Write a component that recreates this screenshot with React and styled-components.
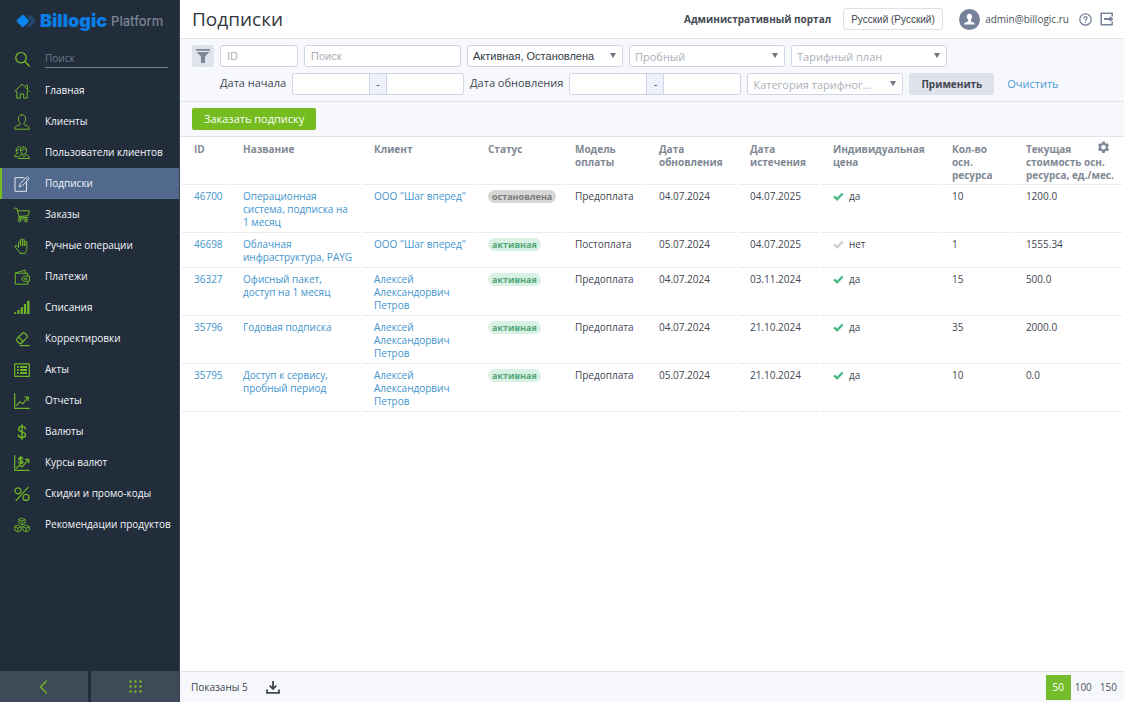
import React from 'react';
import { useState } from 'react';
import styled, { createGlobalStyle, css } from 'styled-components';

const GlobalStyle = createGlobalStyle`
  * {
    box-sizing: border-box;
  }

  body {
    margin: 0;
    background-color: #ffffff;
    color: #3f4650;
    font-family: "Open Sans", "Noto Sans", sans-serif;
    font-size: 10px;
    line-height: 13px;
  }

  a {
    text-decoration: none;
  }
`;

const Layout = styled.div`
  display: flex;
  min-height: 100vh;
`;

/* Sidebar */

const Sidebar = styled.aside`
  display: flex;
  flex-direction: column;
  flex: none;
  width: 180px;
  background-color: #222d3c;
  border-right: 1px solid #39424f;
`;

const Logo = styled.a`
  display: flex;
  align-items: center;
  height: 42px;
  padding-left: 16px;
  gap: 4px;
  font-family: Inter, "Liberation Sans", sans-serif;
  line-height: 20px;
`;

const LogoName = styled.span`
  color: #0b7de6;
  font-size: 18px;
  font-weight: 900;
`;

const LogoSuffix = styled.span`
  color: #7c8492;
  font-size: 13px;
  font-weight: 500;
`;

const SearchRow = styled.label`
  display: flex;
  align-items: center;
  height: 33px;
  padding: 0 11px 0 14px;
  gap: 15px;
  color: #7cc623;
`;

const SearchInput = styled.input`
  flex: 1;
  min-width: 0;
  height: 18px;
  padding: 0;
  border: none;
  border-bottom: 1px solid #7b8491;
  background-color: transparent;
  color: #e9ecf1;
  font-family: inherit;
  font-size: 10px;
  outline: none;

  &::placeholder {
    color: #717a88;
    opacity: 1;
  }
`;

const Menu = styled.nav`
  display: flex;
  flex-direction: column;
  flex: 1;
`;

const MenuItem = styled.a`
  display: flex;
  align-items: center;
  height: 31px;
  padding-left: 14px;
  gap: 15px;
  color: #f4f6f9;
  white-space: nowrap;

  svg {
    flex: none;
    color: #6fb526;
  }

  ${({ $active }) => $active && css`
    background-color: #50698d;
    box-shadow: inset 2px 0 0 #76bc21;

    svg {
      color: #e3e9f1;
    }
  `}
`;

const SidebarFooter = styled.div`
  display: grid;
  grid-template-columns: 1fr 1fr;
  gap: 3px;
`;

const SidebarButton = styled.button`
  display: flex;
  align-items: center;
  justify-content: center;
  height: 31px;
  padding: 0;
  border: none;
  background-color: #3f4a58;
  color: #76bc21;
  cursor: pointer;
`;

/* Page */

const Page = styled.main`
  display: flex;
  flex-direction: column;
  flex: 1;
  min-width: 0;
`;

const Header = styled.header`
  display: flex;
  align-items: center;
  height: 39px;
  padding: 0 10px 0 12px;
  border-bottom: 1px solid #e0e4ee;
`;

const Title = styled.h1`
  flex: 1;
  margin: 0;
  color: #33373d;
  font-size: 19px;
  font-weight: 400;
  line-height: 26px;
`;

const Portal = styled.strong`
  margin-right: 12px;
  color: #444a53;
`;

const Language = styled.select`
  height: 22px;
  margin-right: 16px;
  padding: 0 7px;
  border: 1px solid #dde0e6;
  border-radius: 3px;
  background-color: #ffffff;
  color: #3f4650;
  font-family: "Liberation Sans", Arial, sans-serif;
  font-size: 10px;
  appearance: none;
`;

const User = styled.a`
  display: flex;
  align-items: center;
  gap: 5px;
  margin-right: 10px;
  color: #4b525d;
`;

const IconButton = styled.button`
  display: flex;
  padding: 0;
  border: none;
  background-color: transparent;
  color: ${({ $color }) => $color || '#76829a'};
  cursor: pointer;

  & + & {
    margin-left: 8px;
  }
`;

const Filters = styled.form`
  display: flex;
  align-items: flex-start;
  gap: 6px;
  padding: 6px 12px;
  border-bottom: 1px solid #e0e4ee;
  background-color: #f7f8fc;
  font-size: 11px;
`;

const FilterToggle = styled.button`
  display: flex;
  align-items: center;
  justify-content: center;
  flex: none;
  width: 22px;
  height: 22px;
  padding: 0;
  border: none;
  border-radius: 2px;
  background-color: #dfe3ec;
  color: #7d8795;
  cursor: pointer;
`;

const Fields = styled.div`
  display: flex;
  flex-wrap: wrap;
  gap: 6px;
`;

const Input = styled.input`
  width: ${({ $small }) => ($small ? '78px' : '157px')};
  height: 22px;
  padding: 0 6px;
  border: 1px solid #cfd5e2;
  border-radius: 3px;
  background-color: #ffffff;
  color: #3f4650;
  font-family: "Liberation Sans", Arial, sans-serif;
  font-size: 11px;
  outline: none;

  &::placeholder {
    color: #aab0ba;
    opacity: 1;
  }
`;

const SelectBox = styled.div`
  position: relative;
  width: 156px;
  height: 22px;

  svg {
    position: absolute;
    top: 8px;
    right: 7px;
    color: #6d747f;
    pointer-events: none;
  }
`;

const SelectField = styled.select`
  width: 100%;
  height: 100%;
  padding: 0 26px 0 5px;
  border: 1px solid #cfd5e2;
  border-radius: 3px;
  background-color: #ffffff;
  color: ${({ $filled }) => ($filled ? '#333a45' : '#aab0ba')};
  font-family: ${({ $filled }) => ($filled ? '"Liberation Sans", Arial' : '"Open Sans", "Noto Sans"')}, sans-serif;
  font-size: 11px;
  text-overflow: ellipsis;
  appearance: none;
`;

const DateField = styled.div`
  display: flex;
  gap: 6px;
  line-height: 20px;
`;

const Range = styled.div`
  display: flex;
  height: 22px;
  border: 1px solid #cfd5e2;
  border-radius: 3px;
  background-color: #ffffff;
  overflow: hidden;
`;

const RangeInput = styled.input`
  width: 76px;
  padding: 0 6px;
  border: none;
  background-color: transparent;
  font-size: 11px;
  outline: none;
`;

const RangeDash = styled.span`
  width: 18px;
  border: solid #cfd5e2;
  border-width: 0 1px;
  background-color: #edf1fb;
  text-align: center;
`;

const ApplyButton = styled.button`
  height: 22px;
  padding: 0 12px;
  border: none;
  border-radius: 2px;
  background-color: #dfe2ec;
  color: #3f4650;
  font-family: inherit;
  font-size: 10px;
  font-weight: 700;
  cursor: pointer;
`;

const ClearLink = styled.a`
  padding: 0 7px;
  color: #4a9ad6;
  line-height: 22px;
`;

const Toolbar = styled.div`
  display: flex;
  padding: 6px 12px;
  border-bottom: 1px solid #e0e4ee;
  background-color: #f7f8fc;
`;

const OrderButton = styled.button`
  height: 22px;
  padding: 0 12px 1px;
  border: none;
  border-radius: 2px;
  background-color: #74bc1f;
  color: #ffffff;
  font-family: inherit;
  font-size: 11px;
  cursor: pointer;
`;

/* Table */

const TableArea = styled.section`
  position: relative;
  flex: 1;
`;

const TableSettings = styled.div`
  position: absolute;
  top: 4px;
  right: 14px;
`;

const Table = styled.table`
  width: 100%;
  table-layout: fixed;
  border-collapse: separate;
  border-spacing: 2px 0;
`;

const Th = styled.th`
  padding: 6px 4px 2px 12px;
  border-bottom: 1px solid #e8ebf0;
  color: #808994;
  font-weight: 700;
  text-align: left;
  vertical-align: top;
`;

const Td = styled.td`
  padding: 5px 4px 3px 12px;
  border-bottom: 1px solid #e8ebf0;
  vertical-align: top;
`;

const CellLink = styled.a`
  color: #4294cd;
`;

const Badge = styled.span`
  display: inline-block;
  padding: 0 4px;
  border-radius: 7px;
  background-color: ${({ $stopped }) => ($stopped ? '#d6d6d6' : '#d9f1e3')};
  color: ${({ $stopped }) => ($stopped ? '#7b7b7b' : '#4fa677')};
  font-size: 9px;
  font-weight: 700;
  line-height: 13px;
  vertical-align: top;
`;

const Flag = styled.span`
  display: flex;
  align-items: center;
  gap: 5px;

  svg {
    color: ${({ $on }) => ($on ? '#4dba87' : '#ccd3d8')};
  }
`;

const Footer = styled.footer`
  display: flex;
  align-items: center;
  height: 31px;
  padding: 0 3px 0 11px;
  gap: 18px;
  border-top: 1px solid #e0e4ee;
  background-color: #f7f8fc;
`;

const Pages = styled.div`
  display: flex;
  margin-left: auto;
`;

const PageSize = styled.button`
  min-width: 25px;
  height: 25px;
  padding: 0 4px;
  border: none;
  background-color: ${({ $active }) => ($active ? '#74bc2b' : 'transparent')};
  color: ${({ $active }) => ($active ? '#ffffff' : '#4b525d')};
  font-family: inherit;
  font-size: 10px;
  cursor: pointer;
`;

/* Icons */

const Icon = ({ size = 16, box = 16, width = 1, children }) => (
  <svg
    width={size}
    height={size}
    viewBox={`0 0 ${box} ${box}`}
    fill="none"
    stroke="currentColor"
    strokeWidth={width}
    strokeLinecap="round"
    strokeLinejoin="round"
    aria-hidden="true"
  >
    {children}
  </svg>
);

const icons = {
  search: <><circle cx="7" cy="6.7" r="5.2" /><path d="M10.8 10.5 15.2 15" /></>,
  home: <path d="M.6 8.4 8 1.2l7.4 7.2M11.6 2.4h1.9v3.6M2.8 8.2v6.9h3.5v-4.2h3.4v4.2h3.5V8.2" />,
  client: <path d="M8 .8c-2.3 0-3.6 1.7-3.6 4 0 1.9.8 3.5 1.8 4.4.2 1.5-.6 1.7-2.2 2.2C1.900 12 .8 12.700.8 15.200h14.400c0-2.500-1.100-3.200-3.200-3.800-1.600-.5-2.400-.7-2.200-2.200 1-.9 1.800-2.500 1.800-4.400 0-2.300-1.300-4-3.600-4Z" />,
  users: (
    <>
      <path d="M9.600 2c-1.900 0-3 1.200-3 3.100 0 2.400 1.300 4.200 3 4.200s3-1.800 3-4.200c0-1.900-1.100-3.100-3-3.100ZM6.700 5c2.200.3 3.300-.4 4-1.300.4.800 1 1.200 1.900 1.400" />
      <path d="M8 8.900c0 1.500-3.500 1.300-3.500 4.600h11c0-3.300-4.200-3.100-4.200-4.600M8.200 10.600l1.500 1.200 1.500-1.200" />
      <path d="M6.600 2.100C5.800 1.600 3.600 1.700 2.700 3.100c-.9 1.300-.6 3.200 0 4.300.4.700.9 1.100 1.500 1.300M2.300 5.400c1.200.1 2.400-.4 3-1.200M3 8.700C2.600 9.500.6 9.700.6 11.700h3.100" />
    </>
  ),
  subscription: (
    <>
      <path d="M10 1.700H1v13.600h11.500V6.500" />
      <path d="m5.300 10.700.9-3.100 6.500-6.400c.5-.4 1-.4 1.500 0l.6.600c.4.500.4 1 0 1.400L8.300 9.700l-3 1ZM11.700 2.200l2.100 2.100" strokeWidth=".9" />
    </>
  ),
  cart: (
    <>
      <path d="M.5 1.200h2.400l2.400 9.300h8.600M3.600 3.800h11.900l-1.600 5-8.900.6M5.300 10.500l-.9 1.500h9" />
      <circle cx="5.600" cy="13.700" r="1.300" /><circle cx="12" cy="13.700" r="1.300" />
    </>
  ),
  hand: <path d="M4.600 9.600V4.200c0-1.400 2-1.400 2 0v3.600V2c0-1.500 2.100-1.500 2.100 0v5.800V2.600c0-1.500 2.100-1.500 2.100 0v5.300-3.600c0-1.400 2-1.400 2 0v6c0 2-.6 3.200-1.500 4.100v1H6v-1C4.200 13 3.200 11.200 1.200 9c-1-1.400.6-2.300 1.600-1.300l1.800 1.900" />,
  wallet: (
    <>
      <path d="M13.800 7V4.200H1.300v11h12.500v-2.800M1.300 4.200 11.200 1v3.200" />
      <path d="M15 7H10.500c-3.300 0-3.300 5.300 0 5.300H15ZM12.800 9v1.500" /><circle cx="10.700" cy="9.700" r=".8" />
    </>
  ),
  bars: (
    <g fill="currentColor" stroke="none">
      <path d="M.2 12.200h1.900V14H.2zM3.400 10h2.200v4H3.400zM6.700 7.200h2.200V14H6.700zM9.900 4h2.200v10H9.900zM13.100.7h2.400V14h-2.400z" />
    </g>
  ),
  eraser: <path d="M10.800 2.300 12.900 4.300c.8.800.8 1.500 0 2.300L7.600 12c-.9.900-1.700.9-2.600 0L2.900 10c-.8-.8-.8-1.600 0-2.400l5.500-5.400c.8-.8 1.600-.7 2.400.1ZM4.600 6l4.600 4.600M6.200 14.700h9" strokeWidth="1.200" />,
  acts: (
    <>
      <path d="M.7 1.800h14.600v12.500H.7z" strokeWidth="1.200" />
      <path d="M3 4.900h1.600M6 4.900h7M3 8h1.600M6 8h7M3 11.100h1.600M6 11.100h7" strokeWidth="2" strokeLinecap="butt" />
    </>
  ),
  reports: <path d="M.7.700v14.600h14.600M2.700 12.300 6 8.600l2.700 2.300 5.600-6.700M10.800 4h3.500v3.600" strokeWidth="1.200" />,
  dollar: <path d="M11.300 4.700C11.200 3.200 10 2.400 8 2.400S4.700 3.300 4.700 4.900c0 4 6.800 2 6.800 6 0 1.700-1.400 2.600-3.500 2.600s-3.500-.9-3.600-2.600M8 .8v14.400" strokeWidth="1.400" />,
  rates: (
    <>
      <path d="M.7.700v14.600h14.600M2.700 13l3-3 2.300 2 6.400-7.400M11.500 4.400h3.200v3.500" strokeWidth="1.200" />
      <path d="M8.700 3.500C8.500 2.300 4.700 2 4.700 3.900c0 1.800 4.200 1 4.200 3 0 1.800-4.100 1.600-4.300.2M6.800 1.200v7.800" strokeWidth="1.400" />
    </>
  ),
  percent: <g strokeWidth="1.200"><circle cx="4" cy="4.800" r="3" /><circle cx="12" cy="11.400" r="3" /><path d="M14 1.400 2 14.700" /></g>,
  cubes: (
    <g strokeWidth=".9">
      <path d="m8 1.200 3.100 1.500v3.400L8 7.600 4.900 6.100V2.700ZM4.900 2.700 8 4.200l3.100-1.500M8 4.200v3.400" />
      <path d="m3.900 8.200 3.200 1.500v3.600l-3.200 1.500-3.200-1.500V9.700ZM.7 9.700l3.200 1.500 3.200-1.500M3.900 11.200v3.600" />
      <path d="m12.100 8.200 3.200 1.500v3.600l-3.200 1.500-3.200-1.500V9.700ZM8.900 9.700l3.200 1.500 3.200-1.500M12.100 11.200v3.600" />
    </g>
  ),
};

const LogoMark = () => (
  <svg width="20" height="14" viewBox="0 0 20 14" aria-hidden="true">
    <path d="M10.500 1.300h3.200c.9 0 1.500.2 2.100.9l3 3.400c.8.900.8 1.900 0 2.800l-3 3.400c-.6.700-1.200.9-2.100.9h-3.200l4.500-5.700Z" fill="#23486f" />
    <path d="M5.600 1.400c.8-.8 1.600-.8 2.400 0l4.300 4.400c.8.800.8 1.600 0 2.400L8 12.600c-.8.800-1.600.8-2.400 0L1.300 8.200c-.8-.8-.8-1.600 0-2.400Z" fill="#0a84f0" />
  </svg>
);

const Caret = () => (
  <svg width="6" height="5" viewBox="0 0 6 5" aria-hidden="true">
    <path d="M0 0h6L3 5Z" fill="currentColor" />
  </svg>
);

const Check = () => (
  <svg width="11" height="9" viewBox="0 0 11 9" aria-hidden="true">
    <path d="m1.200 4.300 2.900 2.900 5.600-5.700" fill="none" stroke="currentColor" strokeWidth="2.400" />
  </svg>
);

const Gear = () => (
  <svg width="13" height="13" viewBox="0 0 24 24" aria-hidden="true">
    <path
      fill="currentColor"
      fillRule="evenodd"
      d="M9.700 1h4.600l.7 3.100 1.800 1 3-1 2.400 4-2.300 2.200v2.300l2.300 2.200-2.400 4.100-3-1-1.800 1.100-.7 3H9.700l-.7-3-1.800-1.100-3 1-2.400-4.100 2.300-2.200v-2.300L1.800 8.100l2.400-4 3 1 1.800-1ZM12 7.200a4.300 4.300 0 1 0 0 8.600 4.300 4.300 0 0 0 0-8.600Z"
    />
  </svg>
);

const Funnel = () => (
  <svg width="16" height="16" viewBox="0 0 16 16" aria-hidden="true">
    <path d="M1 1h14v1.700H1zM1.800 4h12.400L10 8.700V15H6V8.700Z" fill="currentColor" />
  </svg>
);

const Avatar = () => (
  <svg width="21" height="21" viewBox="0 0 21 21" aria-hidden="true">
    <circle cx="10.500" cy="10.500" r="10.500" fill="#76829a" />
    <path d="M10.500 4.700c-1.800 0-2.700 1.200-2.700 2.900 0 1.400.6 2.400 1.300 3.100v1.500c-.3.700-3.900.7-4.100 3.300h11c-.2-2.600-3.800-2.600-4.100-3.300v-1.500c.7-.7 1.300-1.700 1.300-3.100 0-1.700-.9-2.900-2.700-2.900Z" fill="#ffffff" />
  </svg>
);

const Help = () => (
  <Icon size={13} box={13} width={1.200}>
    <circle cx="6.500" cy="6.500" r="5.700" />
    <path d="M4.900 5.200c0-2 3.200-2 3.200 0 0 1.100-1.500 1.100-1.500 2.300M6.600 9.300v.1" />
  </Icon>
);

const Logout = () => (
  <Icon size={14} box={14} width={1.500}>
    <path d="M12.200 3.900V1.200H1.200v11.600h11V10" />
    <path d="M4 5.900h5.700V3.900L13.500 7 9.700 10.100V8.100H4Z" fill="currentColor" stroke="none" />
  </Icon>
);

const Download = () => (
  <Icon size={14} box={14} width={1.800}>
    <path d="M7 1v7.500M3.700 5.700 7 9l3.300-3.300M1 9.500v3.300h12V9.500" strokeLinecap="butt" strokeLinejoin="miter" />
  </Icon>
);

const Dots = () => (
  <svg width="13" height="13" viewBox="0 0 13 13" fill="currentColor" aria-hidden="true">
    {[1.500, 6.500, 11.500].map((y) => [1.500, 6.500, 11.500].map((x) => (
      <circle key={`${x}-${y}`} cx={x} cy={y} r="1.200" />
    )))}
  </svg>
);

/* Data */

const menu = [
  ['home', 'Главная'],
  ['client', 'Клиенты'],
  ['users', 'Пользователи клиентов'],
  ['subscription', 'Подписки'],
  ['cart', 'Заказы'],
  ['hand', 'Ручные операции'],
  ['wallet', 'Платежи'],
  ['bars', 'Списания'],
  ['eraser', 'Корректировки'],
  ['acts', 'Акты'],
  ['reports', 'Отчеты'],
  ['dollar', 'Валюты'],
  ['rates', 'Курсы валют'],
  ['percent', 'Скидки и промо-коды'],
  ['cubes', 'Рекомендации продуктов'],
];

const columns = [
  { title: 'ID', width: 47 },
  { title: 'Название', width: 129 },
  { title: 'Клиент', width: 112 },
  { title: 'Статус', width: 85 },
  { title: 'Модель оплаты', width: 82 },
  { title: 'Дата обновления', width: 89 },
  { title: 'Дата истечения', width: 81 },
  { title: 'Индивидуальная цена', width: 117 },
  { title: 'Кол-во осн. ресурса', width: 72 },
  { title: 'Текущая стоимость осн. ресурса, ед./мес.', width: 108 },
];

const tableWidth = columns.reduce((sum, column) => sum + column.width, 0);

const subscriptions = [
  { id: 46700, name: 'Операционная система, подписка на 1 месяц', client: 'ООО "Шаг вперед"', status: 'остановлена', model: 'Предоплата', updated: '04.07.2024', expires: '04.07.2025', custom: true, count: 10, price: '1200.0' },
  { id: 46698, name: 'Облачная инфраструктура, PAYG', client: 'ООО "Шаг вперед"', status: 'активная', model: 'Постоплата', updated: '05.07.2024', expires: '04.07.2025', custom: false, count: 1, price: '1555.34' },
  { id: 36327, name: 'Офисный пакет, доступ на 1 месяц', client: 'Алексей Александорвич Петров', status: 'активная', model: 'Предоплата', updated: '04.07.2024', expires: '03.11.2024', custom: true, count: 15, price: '500.0' },
  { id: 35796, name: 'Годовая подписка', client: 'Алексей Александорвич Петров', status: 'активная', model: 'Предоплата', updated: '04.07.2024', expires: '21.10.2024', custom: true, count: 35, price: '2000.0' },
  { id: 35795, name: 'Доступ к сервису, пробный период', client: 'Алексей Александорвич Петров', status: 'активная', model: 'Предоплата', updated: '05.07.2024', expires: '21.10.2024', custom: true, count: 10, price: '0.0' },
];

const Select = ({ label, filled }) => (
  <SelectBox>
    <SelectField aria-label={label} $filled={filled}>
      <option>{label}</option>
    </SelectField>
    <Caret />
  </SelectBox>
);

const DateRange = ({ label, name }) => (
  <DateField>
    <label htmlFor={`${name}-from`}>{label}</label>
    <Range>
      <RangeInput id={`${name}-from`} />
      <RangeDash>-</RangeDash>
      <RangeInput id={`${name}-to`} aria-label={label} />
    </Range>
  </DateField>
);

const App = () => {
  const [pageSize, setPageSize] = useState(50);

  return (
    <>
      <GlobalStyle />
      <Layout>
        <Sidebar>
          <Logo href="#">
            <LogoMark />
            <LogoName>Billogic</LogoName>
            <LogoSuffix>Platform</LogoSuffix>
          </Logo>
          <SearchRow>
            <Icon width={1.200}>{icons.search}</Icon>
            <SearchInput placeholder="Поиск" aria-label="Поиск" />
          </SearchRow>
          <Menu>
            {menu.map(([icon, title]) => (
              <MenuItem key={icon} href="#" $active={icon === 'subscription'}>
                <Icon>{icons[icon]}</Icon>
                {title}
              </MenuItem>
            ))}
          </Menu>
          <SidebarFooter>
            <SidebarButton aria-label="Свернуть">
              <Icon size={14} box={14} width={1.200}><path d="M9.500 1 3.500 7l6 6" /></Icon>
            </SidebarButton>
            <SidebarButton aria-label="Приложения"><Dots /></SidebarButton>
          </SidebarFooter>
        </Sidebar>

        <Page>
          <Header>
            <Title>Подписки</Title>
            <Portal>Административный портал</Portal>
            <Language aria-label="Язык">
              <option>Русский (Русский)</option>
            </Language>
            <User href="#">
              <Avatar />
              admin@billogic.ru
            </User>
            <IconButton aria-label="Помощь"><Help /></IconButton>
            <IconButton aria-label="Выход"><Logout /></IconButton>
          </Header>

          <Filters onSubmit={(e) => e.preventDefault()}>
            <FilterToggle type="button" aria-label="Фильтр"><Funnel /></FilterToggle>
            <Fields>
              <Input $small placeholder="ID" aria-label="ID" />
              <Input placeholder="Поиск" aria-label="Поиск" />
              <Select label="Активная, Остановлена" filled />
              <Select label="Пробный" />
              <Select label="Тарифный план" />
              <DateRange label="Дата начала" name="start" />
              <DateRange label="Дата обновления" name="update" />
              <Select label="Категория тарифного плана" />
              <ApplyButton>Применить</ApplyButton>
              <ClearLink href="#">Очистить</ClearLink>
            </Fields>
          </Filters>

          <Toolbar>
            <OrderButton>Заказать подписку</OrderButton>
          </Toolbar>

          <TableArea>
            <Table>
              <colgroup>
                {columns.map(({ title, width }) => (
                  <col key={title} style={{ width: `${(width / tableWidth) * 100}%` }} />
                ))}
              </colgroup>
              <thead>
                <tr>
                  {columns.map(({ title }) => <Th key={title}>{title}</Th>)}
                </tr>
              </thead>
              <tbody>
                {subscriptions.map((item) => (
                  <tr key={item.id}>
                    <Td><CellLink href="#">{item.id}</CellLink></Td>
                    <Td><CellLink href="#">{item.name}</CellLink></Td>
                    <Td><CellLink href="#">{item.client}</CellLink></Td>
                    <Td><Badge $stopped={item.status === 'остановлена'}>{item.status}</Badge></Td>
                    <Td>{item.model}</Td>
                    <Td>{item.updated}</Td>
                    <Td>{item.expires}</Td>
                    <Td>
                      <Flag $on={item.custom}>
                        <Check />
                        {item.custom ? 'да' : 'нет'}
                      </Flag>
                    </Td>
                    <Td>{item.count}</Td>
                    <Td>{item.price}</Td>
                  </tr>
                ))}
              </tbody>
            </Table>
            <TableSettings>
              <IconButton $color="#7d8795" aria-label="Настройки"><Gear /></IconButton>
            </TableSettings>
          </TableArea>

          <Footer>
            Показаны 5
            <IconButton $color="#3f4650" aria-label="Скачать"><Download /></IconButton>
            <Pages>
              {[50, 100, 150].map((size) => (
                <PageSize key={size} $active={size === pageSize} onClick={() => setPageSize(size)}>
                  {size}
                </PageSize>
              ))}
            </Pages>
          </Footer>
        </Page>
      </Layout>
    </>
  );
};

export default App;
